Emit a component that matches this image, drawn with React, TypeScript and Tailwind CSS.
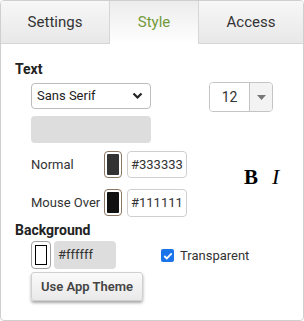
import React from "react";

const font = { fontFamily: "Roboto, 'Liberation Sans', sans-serif" };

function Swatch({ color }: { color: string }) {
  return (
    <div className="w-[18px] h-[27px] rounded-[4px] border border-[#8a7560] bg-white p-[2px]">
      <div className="w-full h-full rounded-[1px]" style={{ background: color }} />
    </div>
  );
}

export default function App() {
  return (
    <div className="w-[304px] h-[321px] bg-white" style={font}>
      <div className="w-[304px] h-[321px] border border-[#cfcfcf] rounded-[4px] overflow-hidden flex flex-col">
        <div className="flex h-[43px] shrink-0">
          <div className="w-[108px] border-b border-[#d6d6d6] bg-gradient-to-b from-[#f7f7f7] to-[#e8e8e8] flex items-center justify-center text-[15px] text-[#333]">
            Settings
          </div>
          <div className="w-[90px] border-l border-r border-[#d6d6d6] bg-gradient-to-b from-[#ececec] to-[#ffffff] flex items-center justify-center text-[15px] text-[#739a3a]">
            Style
          </div>
          <div className="flex-1 border-b border-[#d6d6d6] bg-gradient-to-b from-[#f7f7f7] to-[#e8e8e8] flex items-center justify-center text-[15px] text-[#333]">
            Access
          </div>
        </div>

        <div className="pl-[14px] relative flex-1">
          <div className="mt-[17px] h-[16px] leading-[16px] text-[14px] font-bold text-[#222]">Text</div>

          <div className="flex mt-[5px]">
            <div className="ml-[16px] mt-[1px] flex flex-col gap-[7px]">
              <div className="w-[120px] h-[26px] border border-[#bdbdbd] rounded-[4px] flex items-center justify-between pl-[5px] pr-[7px] text-[13px] text-[#222]">
                <span>Sans Serif</span>
                <svg width="11" height="8" viewBox="0 0 11 8">
                  <polyline points="1.5,1.5 5.5,5.5 9.5,1.5" fill="none" stroke="#222" strokeWidth="2.2" />
                </svg>
              </div>
              <div className="w-[120px] h-[27px] rounded-[4px] bg-[#dddddd]" />
            </div>
            <div className="ml-[58px] w-[64px] h-[30px] border border-[#c4c4c4] rounded-[4px] flex overflow-hidden">
              <div className="w-[39px] flex items-center justify-center text-[14px] text-[#333] bg-white">12</div>
              <div className="flex-1 border-l border-[#c4c4c4] bg-[#f3f3f3] flex items-center justify-center">
                <svg width="9" height="5" viewBox="0 0 9 5">
                  <polygon points="0,0 9,0 4.5,5" fill="#777" />
                </svg>
              </div>
            </div>
          </div>

          <div className="flex mt-[8px]">
            <div className="ml-[16px] flex flex-col gap-[11px]">
              <div className="flex items-center h-[27px]">
                <span className="w-[73px] text-[13px] text-[#333]">Normal</span>
                <Swatch color="#333333" />
                <div className="ml-[5px] w-[60px] h-[27px] border border-[#cfcfcf] rounded-[4px] flex items-center pl-[3px] text-[13px] text-[#333]">#333333</div>
              </div>
              <div className="flex items-center h-[27px]">
                <span className="w-[73px] text-[13px] text-[#333]">Mouse Over</span>
                <Swatch color="#111111" />
                <div className="ml-[5px] w-[60px] h-[28px] border border-[#cfcfcf] rounded-[4px] flex items-center pl-[3px] text-[13px] text-[#333]">#111111</div>
              </div>
            </div>
            <div className="ml-[57px] mt-[14px] flex items-start gap-[14px] h-[24px]" style={{ fontFamily: "'Liberation Serif', serif" }}>
              <span className="text-[21px] font-bold text-black leading-[24px]">B</span>
              <span className="text-[22px] italic text-black leading-[24px]">I</span>
            </div>
          </div>

          <div className="mt-[6px] h-[16px] leading-[16px] text-[14px] font-bold text-[#222]">Background</div>

          <div className="flex mt-[3px] items-start">
            <div className="ml-[16px] flex flex-col gap-[3px]">
              <div className="flex gap-[3px]">
                <div className="w-[20px] h-[28px] rounded-[4px] border border-[#a0a0a0] p-[3px] bg-white">
                  <div className="w-full h-full border border-black bg-white" />
                </div>
                <div className="w-[62px] h-[28px] rounded-[4px] bg-[#dddddd] flex items-center pl-[4px] text-[13px] text-[#333]">#ffffff</div>
              </div>
              <div className="w-[112px] h-[29px] rounded-[3px] border border-[#d0d0d0] bg-gradient-to-b from-[#fafafa] to-[#e9e9e9] shadow-[0_2px_3px_rgba(0,0,0,0.35)] flex items-center justify-center text-[13px] font-semibold text-[#444]">
                Use App Theme
              </div>
            </div>
            <div className="ml-[18px] mt-[5px] flex items-center gap-[6px]">
              <div className="w-[13px] h-[13px] rounded-[2px] bg-[#1a73e8] flex items-center justify-center">
                <svg width="10" height="8" viewBox="0 0 10 8">
                  <polyline points="1.3,4 3.8,6.4 8.7,1.4" fill="none" stroke="white" strokeWidth="1.8" />
                </svg>
              </div>
              <span className="text-[13px] text-[#333]">Transparent</span>
            </div>
          </div>
        </div>
      </div>
    </div>
  );
}
